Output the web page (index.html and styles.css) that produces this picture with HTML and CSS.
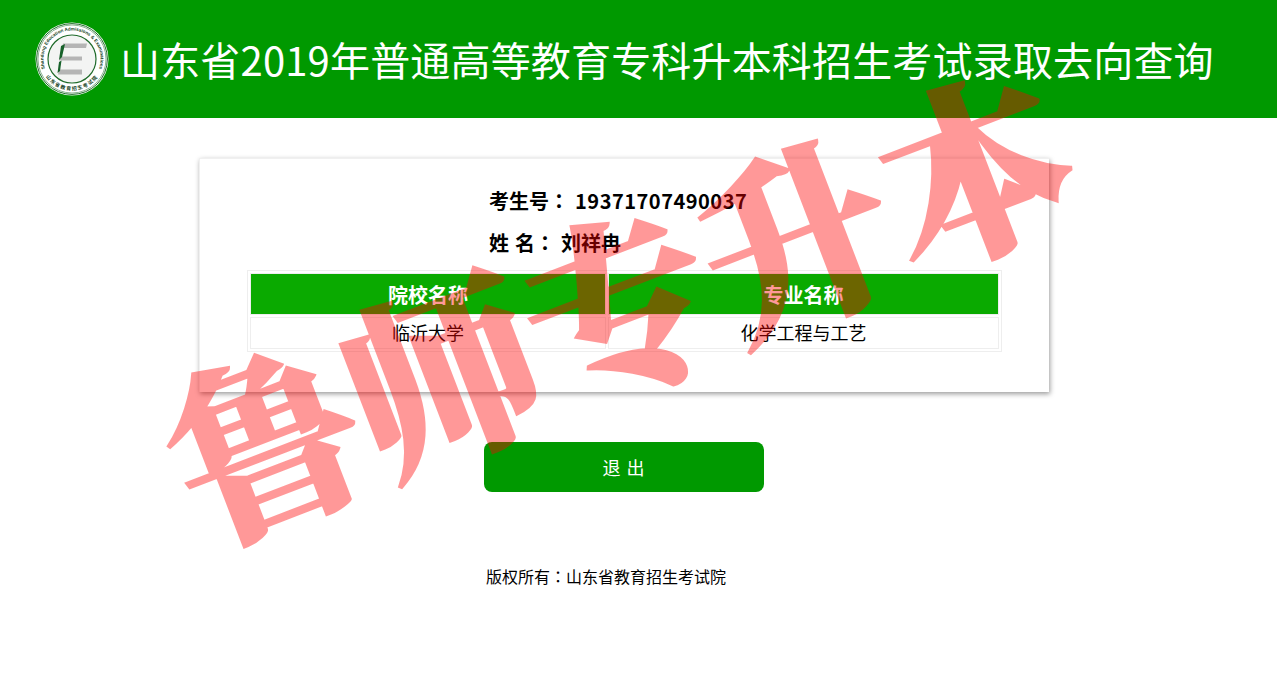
FILE: index.html
```html
<!DOCTYPE html>
<html lang="zh-CN">
<head>
<meta charset="utf-8">
<title>录取去向查询</title>
<link rel="stylesheet" href="styles.css">
</head>
<body>
<header class="banner">
  <svg class="logo" viewBox="0 0 74 74" width="74" height="74" aria-hidden="true">
    <circle cx="37" cy="37" r="36.5" fill="#fff"/>
    <circle cx="37" cy="37" r="35.4" fill="none" stroke="#1f6b2a" stroke-width="1"/>
    <circle cx="37" cy="37" r="34" fill="none" stroke="#1f6b2a" stroke-width=".5"/>
    <circle cx="37" cy="37" r="24" fill="#f3f4f3" stroke="#1f6b2a" stroke-width="1.2"/>
    <defs>
      <path id="ringTop" d="M11.5 50 A28.6 28.6 0 1 1 62.5 50"/>
      <path id="ringBottom" d="M6.5 46 A32 32 0 0 0 67.5 46"/>
    </defs>
    <text class="ring-en"><textPath href="#ringTop" startOffset="50%" text-anchor="middle">Shandong Education Admissions &amp; Examinations</textPath></text>
    <text class="ring-cn"><textPath href="#ringBottom" startOffset="50%" text-anchor="middle">山东省教育招生考试院</textPath></text>
    <polygon points="28,21.5 52,21.5 51,26 27,26" fill="#b5b5b5"/>
    <polygon points="25,34.5 47,34.5 47,38.5 24,38.5" fill="#b5b5b5"/>
    <polygon points="24,47.5 47,47.5 47,52.5 23,52.5" fill="#b5b5b5"/>
    <polygon points="26,24 30,22 27,35 24,38" fill="#17612a"/>
    <polygon points="24,40 26.5,38.5 25,49 22.5,51" fill="#17612a"/>
  </svg>
  <h1 class="title">山东省2019年普通高等教育专科升本科招生考试录取去向查询</h1>
</header>
<main class="page">
  <section class="card">
    <div class="info">
      <p class="info-row">考生号<span class="colon" lang="zh-TW">：</span> <span class="digits">19371707490037</span></p>
      <p class="info-row">姓 名<span class="colon" lang="zh-TW">：</span> 刘祥冉</p>
    </div>
    <table class="result">
      <thead>
        <tr><th class="col-school">院校名称</th><th class="col-major">专业名称</th></tr>
      </thead>
      <tbody>
        <tr><td>临沂大学</td><td>化学工程与工艺</td></tr>
      </tbody>
    </table>
  </section>
  <button class="exit" type="button">退 出</button>
  <footer class="copyright">版权所有<span class="colon" lang="zh-TW">：</span>山东省教育招生考试院</footer>
</main>
<div class="watermark">鲁师专升本</div>
</body>
</html>
```
FILE: styles.css
```css
* { box-sizing: border-box; }
html, body { margin: 0; height: 100%; overflow: hidden; }
body {
  position: relative;
  background: #fff;
  color: #000;
  font-family: "Noto Sans CJK SC", "Liberation Sans", sans-serif;
}
.banner {
  height: 118px;
  background: #009900;
  display: flex;
  align-items: center;
  padding-left: 35px;
  gap: 11px;
}
.logo { flex: none; }
.ring-en { font: 700 4.6px "Liberation Sans", sans-serif; fill: #143f1c; }
.ring-cn { font: 700 5px "Noto Sans CJK SC", sans-serif; fill: #143f1c; letter-spacing: 1.1px; }
.title {
  margin: 0;
  color: #fff;
  font-size: 40px;
  font-weight: 400;
  letter-spacing: .17px;
  line-height: 1;
  white-space: nowrap;
}
.page {
  display: flex;
  flex-direction: column;
  align-items: center;
  padding-right: 29px;
}
.card {
  width: 850px;
  height: 234px;
  margin-top: 40px;
  padding: 21px 0 0 47px;
  background: #fff;
  border: 1px solid #f0f0f0;
  border-width: 1px 0 0 1px;
  box-shadow: 1px 2px 5px rgba(0, 0, 0, .4);
}
.info { padding-left: 242px; }
.info-row {
  margin: 0;
  font-size: 20px;
  font-weight: 700;
  line-height: 42px;
  white-space: pre;
  word-spacing: 1.5px;
}
.colon { font-family: "Noto Sans CJK TC", sans-serif; }
.digits { letter-spacing: .5px; }
.result {
  width: 755px;
  margin-top: 6px;
  border: 1px solid #eee;
  border-spacing: 2px;
  border-collapse: separate;
  table-layout: fixed;
  text-align: center;
}
.col-school { width: 356px; }
.col-major { width: 391px; }
.result th {
  height: 42px;
  padding: 0;
  background: #0aaa00;
  border: 1px solid #eee;
  color: #fff;
  font-size: 20px;
  font-weight: 700;
}
.result td {
  height: 32px;
  padding: 0;
  border: 1px solid #eee;
  font-size: 18px;
  line-height: 28px;
  vertical-align: top;
}
.exit {
  width: 280px;
  height: 50px;
  margin-top: 50px;
  padding: 0;
  border: 0;
  border-radius: 8px;
  background: #009900;
  color: #fff;
  font: 400 18px "Noto Sans CJK SC", sans-serif;
  letter-spacing: 1px;
}
.copyright {
  margin-top: 72px;
  padding-right: 36px;
  font-size: 16px;
  line-height: 24px;
}
.watermark {
  position: absolute;
  left: 116px;
  top: 183px;
  width: 1000px;
  text-align: center;
  font-family: "Noto Serif CJK SC", "Noto Sans CJK SC", serif;
  font-size: 190px;
  font-weight: 900;
  line-height: 230px;
  white-space: nowrap;
  color: #f00;
  -webkit-text-stroke: 3px #f00;
  opacity: .4;
  transform: rotate(-21deg);
  pointer-events: none;
}
```
